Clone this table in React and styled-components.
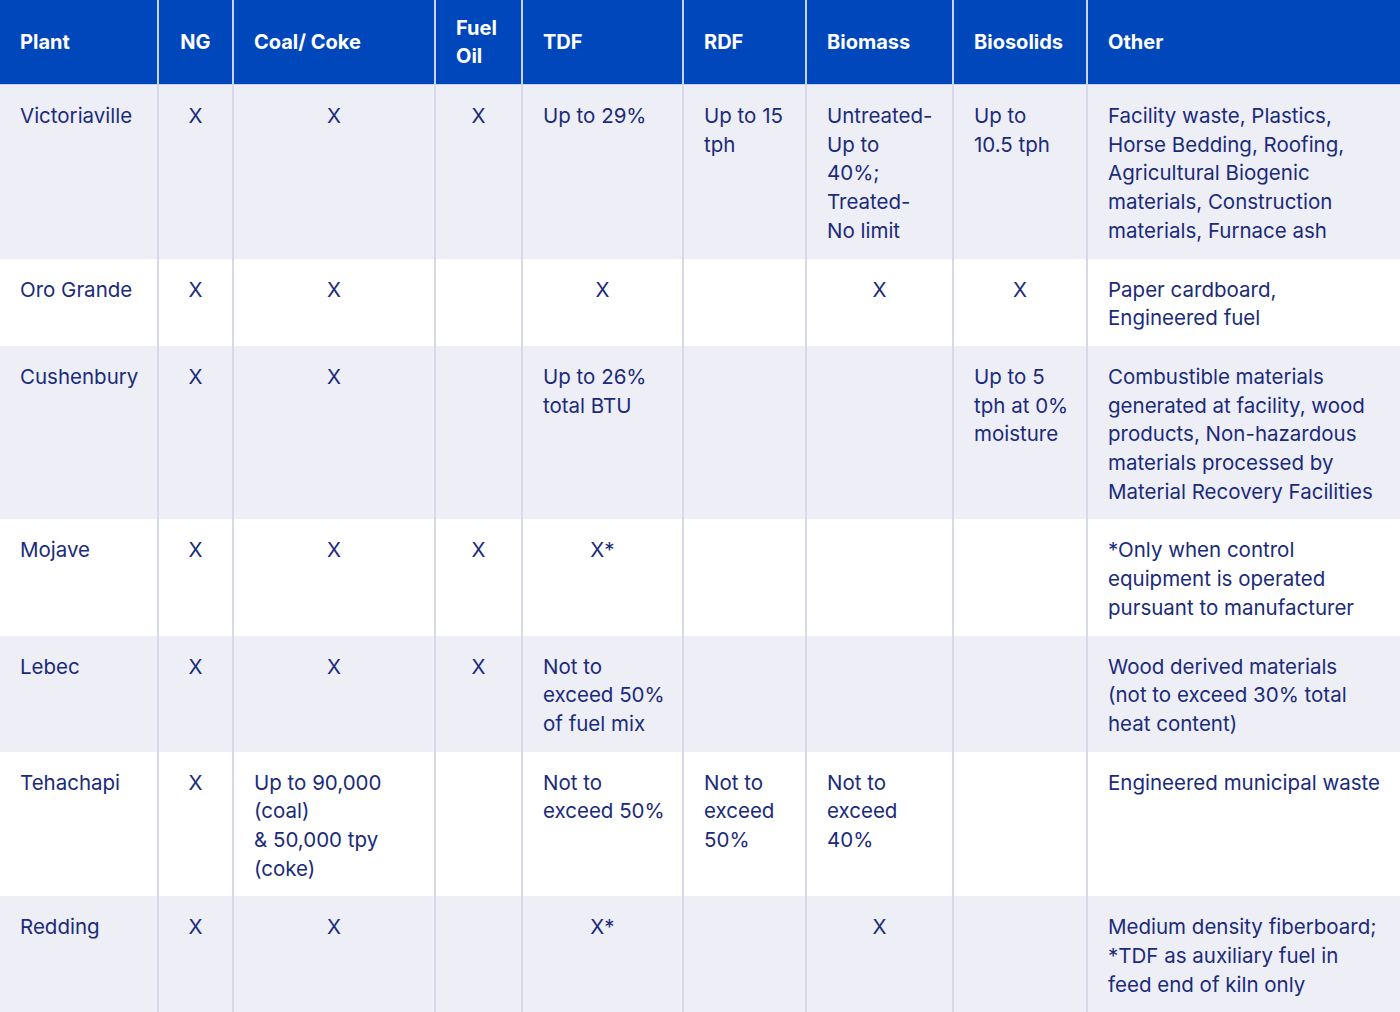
import React from "react";
import styled, { createGlobalStyle } from "styled-components";

const Global = createGlobalStyle`
  html, body { margin: 0; padding: 0; background: #ffffff; }
  body { font-family: Inter, "Noto Sans", sans-serif; }
`;

const Table = styled.table`
  width: 1400px;
  border-collapse: collapse;
  table-layout: fixed;
`;

const HeadCell = styled.th`
  background: #0047bb;
  color: #ffffff;
  font-weight: 700;
  font-size: 20px;
  line-height: 28px;
  text-align: ${(p) => (p.$center ? "center" : "left")};
  vertical-align: middle;
  padding: 14px ${(p) => (p.$center ? "0" : "20px")} 14px ${(p) => (p.$center ? "0" : "20px")};
  border-left: 2px solid #c9d2ee;
  border-bottom: 1px solid #c9d2ee;
  &:first-child { border-left: none; }
`;

const Row = styled.tr`
  background: ${(p) => (p.$shaded ? "#eeeef7" : "#ffffff")};
`;

const Cell = styled.td`
  color: #1a2b7a;
  font-size: 20.5px;
  line-height: 28.7px;
  vertical-align: top;
  white-space: nowrap;
  text-align: ${(p) => (p.$center ? "center" : "left")};
  padding: 17px ${(p) => (p.$center ? "0" : "10px")} 13px ${(p) => (p.$center ? "0" : "20px")};
  border-left: 2px solid #d8d9e8;
  &:first-child { border-left: none; padding-left: 20px; }
`;

const widths = [158, 75, 202, 87, 161, 123, 147, 134, 313];

const headers = [
  { t: "Plant" },
  { t: "NG", c: true },
  { t: "Coal/ Coke" },
  { t: ["Fuel", "Oil"] },
  { t: "TDF" },
  { t: "RDF" },
  { t: "Biomass" },
  { t: "Biosolids" },
  { t: "Other" },
];

const X = { x: "X" };
const XS = { x: "X*" };

const rows = [
  ["Victoriaville", X, X, X, ["Up to 29%"], ["Up to 15", "tph"], ["Untreated-", "Up to", "40%;", "Treated-", "No limit"], ["Up to", "10.5 tph"], ["Facility waste, Plastics,", "Horse Bedding, Roofing,", "Agricultural Biogenic", "materials, Construction", "materials, Furnace ash"]],
  ["Oro Grande", X, X, null, X, null, X, X, ["Paper cardboard,", "Engineered fuel"]],
  ["Cushenbury", X, X, null, ["Up to 26%", "total BTU"], null, null, ["Up to 5", "tph at 0%", "moisture"], ["Combustible materials", "generated at facility, wood", "products, Non-hazardous", "materials processed by", "Material Recovery Facilities"]],
  ["Mojave", X, X, X, XS, null, null, null, ["*Only when control", "equipment is operated", "pursuant to manufacturer"]],
  ["Lebec", X, X, X, ["Not to", "exceed 50%", "of fuel mix"], null, null, null, ["Wood derived materials", "(not to exceed 30% total", "heat content)"]],
  ["Tehachapi", X, ["Up to 90,000", "(coal)", "& 50,000 tpy", "(coke)"], null, ["Not to", "exceed 50%"], ["Not to", "exceed", "50%"], ["Not to", "exceed", "40%"], null, ["Engineered municipal waste"]],
  ["Redding", X, X, null, XS, null, X, null, ["Medium density fiberboard;", "*TDF as auxiliary fuel in", "feed end of kiln only"]],
];

const Lines = ({ lines }) =>
  lines.map((l, i) => (
    <React.Fragment key={i}>
      {i > 0 && <br />}
      {l}
    </React.Fragment>
  ));

export default function App() {
  return (
    <>
      <Global />
      <Table>
        <colgroup>
          {widths.map((w, i) => (
            <col key={i} style={{ width: w }} />
          ))}
        </colgroup>
        <thead>
          <tr>
            {headers.map((h, i) => (
              <HeadCell key={i} $center={h.c}>
                {Array.isArray(h.t) ? <Lines lines={h.t} /> : h.t}
              </HeadCell>
            ))}
          </tr>
        </thead>
        <tbody>
          {rows.map((r, ri) => (
            <Row key={ri} $shaded={ri % 2 === 0}>
              {r.map((c, ci) => {
                if (ci === 0) return <Cell key={ci}>{c}</Cell>;
                if (c === null) return <Cell key={ci} />;
                if (c.x) return <Cell key={ci} $center>{c.x}</Cell>;
                return (
                  <Cell key={ci}>
                    <Lines lines={c} />
                  </Cell>
                );
              })}
            </Row>
          ))}
        </tbody>
      </Table>
    </>
  );
}
